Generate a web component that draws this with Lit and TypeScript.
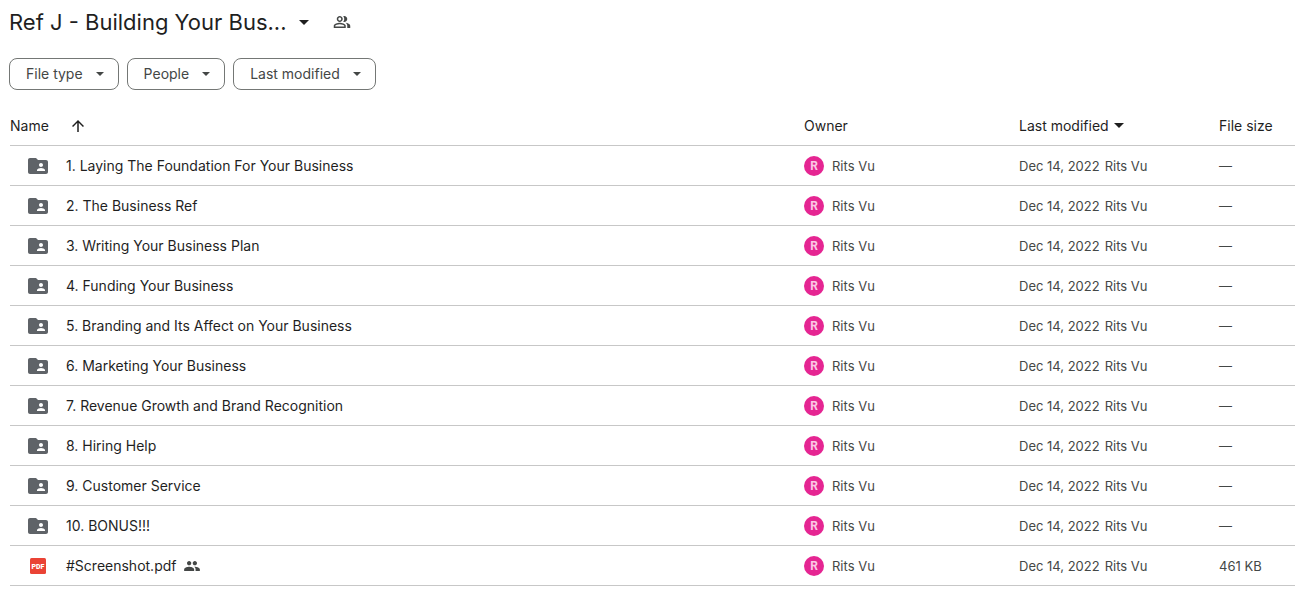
import { LitElement, html, css, svg } from "lit";
import { customElement } from "lit/decorators.js";

interface DriveItem {
  name: string;
  kind: "folder" | "pdf";
  size: string;
}

const folderNames = [
  "1. Laying The Foundation For Your Business",
  "2. The Business Ref",
  "3. Writing Your Business Plan",
  "4. Funding Your Business",
  "5. Branding and Its Affect on Your Business",
  "6. Marketing Your Business",
  "7. Revenue Growth and Brand Recognition",
  "8. Hiring Help",
  "9. Customer Service",
  "10. BONUS!!!",
];

const items: DriveItem[] = [
  ...folderNames.map((name): DriveItem => ({ name, kind: "folder", size: "—" })),
  { name: "#Screenshot.pdf", kind: "pdf", size: "461 KB" },
];

const icon = (cls: string, box: string, content: unknown) =>
  html`<svg class="icon ${cls}" viewBox=${box} aria-hidden="true">${content}</svg>`;

const caret = (cls: string) => icon(cls, "0 0 10 5", svg`<path d="M0 0h10L5 5z" />`);

const arrowUp = () =>
  icon("i18", "0 0 24 24", svg`<path d="M4 12l1.41 1.41L11 7.83V20h2V7.83l5.58 5.59L20 12l-8-8-8 8z" />`);

const peopleOutline = () =>
  icon("i18", "0 0 24 24", svg`
    <path d="M9 12c2.21 0 4-1.79 4-4s-1.79-4-4-4-4 1.79-4 4 1.79 4 4 4zm0-6c1.1 0 2 .9 2 2s-.9 2-2 2-2-.9-2-2 .9-2 2-2z" />
    <path d="M9 13c-2.67 0-8 1.34-8 4v3h16v-3c0-2.66-5.33-4-8-4zm6 5H3v-.99C3.2 16.29 6.3 15 9 15s5.8 1.29 6 2v1z" />
    <path d="M15 12c2.21 0 4-1.79 4-4s-1.79-4-4-4c-.47 0-.91.1-1.33.24C14.5 5.27 15 6.58 15 8s-.5 2.73-1.33 3.76c.42.14.86.24 1.33.24z" />
    <path d="M16.67 13.13C18.04 14.06 19 15.32 19 17v3h4v-3c0-2.18-3.57-3.47-6.33-3.87z" />`);

const peopleFilled = () =>
  icon("shared", "1 5 22 14", svg`<path d="M16 11c1.66 0 2.99-1.34 2.99-3S17.66 5 16 5s-3 1.34-3 3 1.34 3 3 3zm-8 0c1.66 0 2.99-1.34 2.99-3S9.66 5 8 5 5 6.34 5 8s1.34 3 3 3zm0 2c-2.33 0-7 1.17-7 3.5V19h14v-2.5c0-2.33-4.67-3.5-7-3.5zm8 0c-.29 0-.62.02-.97.05 1.16.84 1.97 1.97 1.97 3.45V19h6v-2.5c0-2.33-4.67-3.5-7-3.5z" />`);

const folderIcon = () =>
  icon("i24", "0 0 24 24", svg`<path d="M20 6h-8l-2-2H4c-1.1 0-1.99.9-1.99 2L2 18c0 1.1.9 2 2 2h16c1.1 0 2-.9 2-2V8c0-1.1-.9-2-2-2zm-5 3c1.1 0 2 .9 2 2s-.9 2-2 2-2-.9-2-2 .9-2 2-2zm4 8h-8v-1c0-1.33 2.67-2 4-2s4 .67 4 2v1z" />`);

const pdfIcon = () =>
  icon("i24", "0 0 24 24", svg`
    <rect class="pdf-sheet" x="4" y="4" width="16" height="16" rx="1.5" />
    <text class="pdf-text" x="12" y="14.5" text-anchor="middle">PDF</text>`);

@customElement("app-root")
export class AppRoot extends LitElement {
  static styles = css`
    :host {
      display: block;
      box-sizing: border-box;
      background: #fff;
      color: #1f1f1f;
      font-family: Inter, "Liberation Sans", sans-serif;
      font-size: 14px;
      line-height: 20px;
    }
    button {
      font: inherit;
      color: inherit;
      background: none;
      border: 0;
      padding: 0;
      display: inline-flex;
      align-items: center;
      cursor: pointer;
    }
    .icon { display: block; flex: none; fill: currentColor; }
    .i18 { width: 18px; height: 18px; }
    .i24 { width: 24px; height: 24px; }
    .top {
      display: flex;
      align-items: center;
      height: 44px;
      padding-left: 9px;
    }
    h1 { margin: 0; font-size: 22px; line-height: 28px; font-weight: 400; }
    .title { gap: 12px; }
    .caret-large { width: 10px; height: 5px; }
    .caret-small { width: 8px; height: 4px; }
    .members { margin-left: 24px; color: #444746; }
    .filters {
      display: flex;
      gap: 8px;
      padding: 14px 9px 0;
    }
    .chip {
      box-sizing: border-box;
      height: 32px;
      gap: 13px;
      padding: 0 14px 0 16px;
      border: 1px solid #747775;
      border-radius: 8px;
      color: #444746;
    }
    .list { padding: 16px 0 0 10px; }
    table { width: 100%; border-collapse: separate; border-spacing: 0; table-layout: fixed; }
    th, td {
      height: 39px;
      padding: 0;
      border-bottom: 1px solid #c7c7c7;
      text-align: left;
      font-weight: 400;
      white-space: nowrap;
    }
    th { color: #1f1f1f; }
    td { color: #444746; font-size: 13px; }
    .owner-col { width: 215px; }
    .date-col { width: 200px; }
    .size-col { width: 76px; }
    .cell { display: flex; align-items: center; }
    .name-head { gap: 20px; }
    .date-head { gap: 5px; }
    .name { padding-left: 16px; gap: 16px; color: #5f6368; font-size: 14px; }
    .link { color: #1f1f1f; text-decoration: none; }
    .label { display: flex; align-items: center; gap: 8px; color: #444746; }
    .shared { width: 16px; height: 10px; }
    .owner { gap: 8px; }
    .date { gap: 5px; }
    .avatar {
      width: 20px;
      height: 20px;
      border-radius: 50%;
      background: #e52592;
      color: #fbc8e4;
      font: 700 12px/20px Roboto, sans-serif;
      text-align: center;
    }
    .pdf-sheet { fill: #ea4335; }
    .pdf-text { fill: #fff; font: 900 7px Roboto, sans-serif; }
  `;

  private row(item: DriveItem) {
    const pdf = item.kind === "pdf";
    return html`<tr>
      <td>
        <div class="cell name">
          ${pdf ? pdfIcon() : folderIcon()}
          <span class="label"><a class="link" href="#">${item.name}</a>${pdf ? peopleFilled() : ""}</span>
        </div>
      </td>
      <td><div class="cell owner"><span class="avatar" aria-hidden="true">R</span><span>Rits Vu</span></div></td>
      <td><div class="cell date"><span>Dec 14, 2022</span><span>Rits Vu</span></div></td>
      <td>${item.size}</td>
    </tr>`;
  }

  render() {
    return html`
      <header class="top">
        <h1><button class="title"><span>Ref J - Building Your Bus...</span>${caret("caret-large")}</button></h1>
        <button class="members" aria-label="Manage members">${peopleOutline()}</button>
      </header>
      <div class="filters">
        ${["File type", "People", "Last modified"].map(
          (label) => html`<button class="chip"><span>${label}</span>${caret("caret-small")}</button>`
        )}
      </div>
      <main class="list">
        <table>
          <colgroup><col /><col class="owner-col" /><col class="date-col" /><col class="size-col" /></colgroup>
          <thead>
            <tr>
              <th scope="col"><button class="name-head"><span>Name</span>${arrowUp()}</button></th>
              <th scope="col">Owner</th>
              <th scope="col"><button class="date-head"><span>Last modified</span>${caret("caret-large")}</button></th>
              <th scope="col">File size</th>
            </tr>
          </thead>
          <tbody>${items.map((item) => this.row(item))}</tbody>
        </table>
      </main>
    `;
  }
}
